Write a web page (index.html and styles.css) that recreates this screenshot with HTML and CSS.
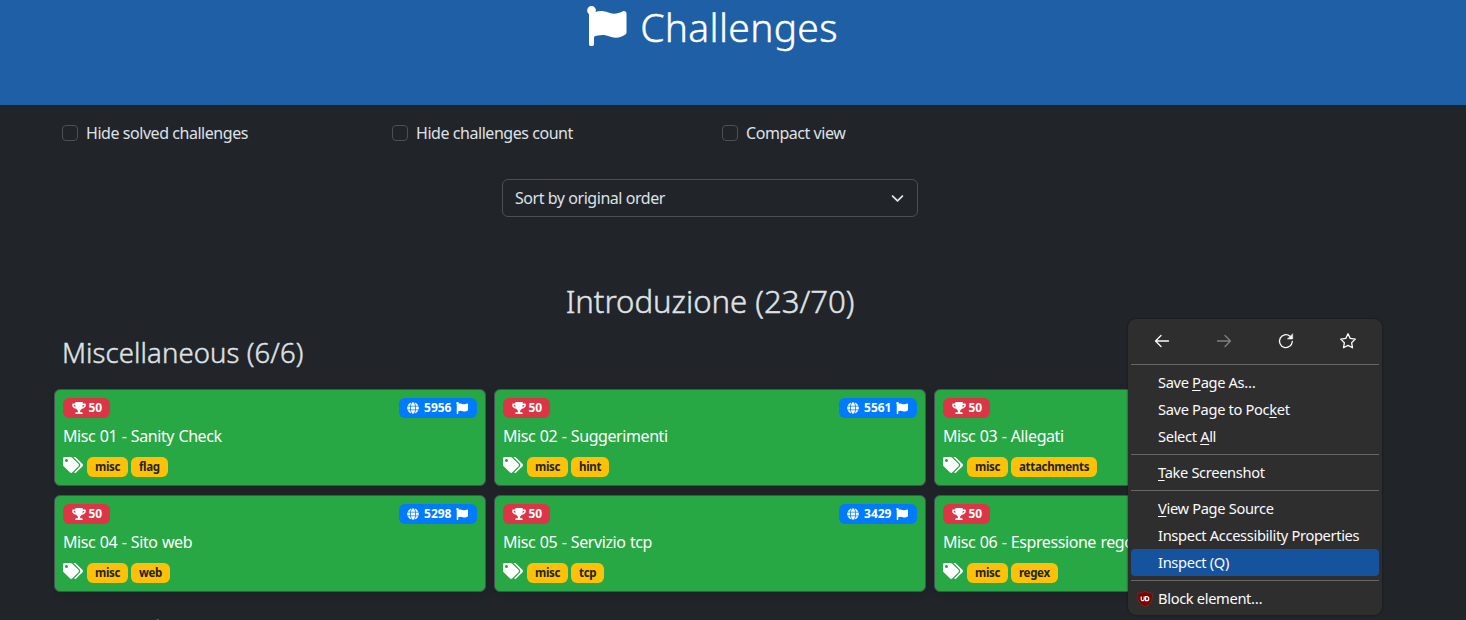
FILE: index.html
```
<!DOCTYPE html>
<html lang="it">
<head>
<meta charset="utf-8">
<title>Challenges</title>
<link rel="stylesheet" href="styles.css">
</head>
<body>
<svg class="defs" width="0" height="0">
  <symbol id="flag" viewBox="0 0 512 512"><path fill="currentColor" d="M349.565 98.783C295.978 98.783 251.721 64 184.348 64c-24.955 0-47.309 4.384-68.045 12.013a55.947 55.947 0 0 0 3.586-23.562C118.117 24.015 94.806 1.206 66.338.048 34.345-1.254 8 24.296 8 56c0 19.026 9.497 35.825 24 45.945V488c0 13.255 10.745 24 24 24h16c13.255 0 24-10.745 24-24v-94.4c28.311-12.064 63.582-22.122 114.435-22.122 53.588 0 97.844 34.783 165.217 34.783 48.169 0 86.667-16.294 122.505-40.858C506.84 359.452 512 349.571 512 339.045v-243.1c0-23.393-24.269-38.87-45.485-29.016-34.338 15.948-76.454 31.854-116.95 31.854z"/></symbol>
  <symbol id="trophy" viewBox="0 0 576 512"><path fill="currentColor" d="M552 64H448V24c0-13.300-10.700-24-24-24H152c-13.300 0-24 10.700-24 24v40H24C10.700 64 0 74.700 0 88v56c0 35.700 22.500 72.400 61.900 100.700 31.500 22.700 69.800 37.100 110 41.700C203.300 338.500 240 360 240 360v72h-48c-35.300 0-64 20.700-64 56v12c0 6.600 5.400 12 12 12h296c6.600 0 12-5.400 12-12v-12c0-35.300-28.700-56-64-56h-48v-72s36.700-21.500 68.100-73.600c40.300-4.600 78.600-19 110-41.700 39.300-28.300 61.900-65 61.900-100.700V88c0-13.300-10.700-24-24-24zM99.300 192.800C74.900 175.200 64 155.600 64 144v-16h64.200c1 32.600 5.800 61.200 12.800 86.200-15.100-5.200-29.200-12.400-41.700-21.400zM512 144c0 16.100-17.700 36.100-35.300 48.800-12.500 9-26.700 16.200-41.800 21.400 7-25 11.800-53.600 12.800-86.200H512v16z"/></symbol>
  <symbol id="globe" viewBox="0 0 496 512"><path fill="currentColor" d="M336.500 160C322 70.700 287.800 8 248 8s-74 62.700-88.500 152h177zM152 256c0 22.200 1.200 43.500 3.300 64h185.300c2.100-20.500 3.300-41.800 3.300-64s-1.200-43.500-3.300-64H155.300c-2.100 20.500-3.300 41.800-3.300 64zm324.700-96c-28.600-67.900-86.500-120.400-158-141.600 24.400 33.800 41.200 84.700 50 141.600h108zM177.200 18.400C105.800 39.600 47.800 92.100 19.300 160h108c8.700-56.900 25.500-107.800 49.900-141.600zM487.400 192H372.700c2.100 21 3.300 42.500 3.300 64s-1.200 43-3.300 64h114.600c5.500-20.500 8.600-41.800 8.600-64s-3.100-43.500-8.500-64zM120 256c0-21.500 1.200-43 3.300-64H8.600C3.200 212.500 0 233.800 0 256s3.200 43.500 8.600 64h114.600c-2-21-3.200-42.500-3.200-64zm39.500 96c14.500 89.300 48.700 152 88.500 152s74-62.700 88.500-152h-177zm159.300 141.600c71.400-21.200 129.400-73.700 158-141.600h-108c-8.800 56.900-25.600 107.800-50 141.600zM19.300 352c28.600 67.900 86.500 120.400 158 141.600-24.400-33.800-41.200-84.700-50-141.600h-108z"/></symbol>
  <symbol id="tags" viewBox="0 0 640 512"><path fill="currentColor" d="M497.941 225.941L286.059 14.059A48 48 0 0 0 252.118 0H48C21.490 0 0 21.490 0 48v204.118a48 48 0 0 0 14.059 33.941l211.882 211.882c18.744 18.745 49.136 18.746 67.882 0l204.118-204.118c18.745-18.745 18.745-49.137 0-67.882zM112 160c-26.510 0-48-21.490-48-48s21.490-48 48-48 48 21.490 48 48-21.490 48-48 48zm513.941 133.823L421.823 497.941c-18.745 18.745-49.137 18.745-67.882 0l-.36-.36L527.640 323.522c16.999-16.999 26.360-39.600 26.360-63.640s-9.362-46.641-26.360-63.640L331.397 0h48.721a48 48 0 0 1 33.941 14.059l211.882 211.882c18.745 18.745 18.745 49.137 0 67.882z"/></symbol>
</svg>
<header class="hero"><h1><svg class="hero-flag"><use href="#flag"/></svg><span>Challenges</span></h1></header>
<main class="container">
  <div class="options">
    <label><input type="checkbox"><span>Hide solved challenges</span></label>
    <label><input type="checkbox"><span>Hide challenges count</span></label>
    <label><input type="checkbox"><span>Compact view</span></label>
  </div>
  <div class="select"><span>Sort by original order</span><svg width="13" height="13" viewBox="0 0 16 16"><path d="m2 5 6 6 6-6" fill="none" stroke="#dee2e6" stroke-width="2.200" stroke-linecap="round" stroke-linejoin="round"/></svg></div>
  <h2><span>Introduzione (23/70)</span></h2>
  <h3><span>Miscellaneous (6/6)</span></h3>
  <div class="grid">
    <article class="card"><div class="row"><b class="badge red"><svg class="trophy"><use href="#trophy"/></svg>50</b><b class="badge blue"><svg class="globe"><use href="#globe"/></svg>5956<svg class="mini-flag"><use href="#flag"/></svg></b></div><p><span>Misc 01 - Sanity Check</span></p><div class="tags"><svg><use href="#tags"/></svg><b class="badge yellow">misc</b><b class="badge yellow">flag</b></div></article>
    <article class="card"><div class="row"><b class="badge red"><svg class="trophy"><use href="#trophy"/></svg>50</b><b class="badge blue"><svg class="globe"><use href="#globe"/></svg>5561<svg class="mini-flag"><use href="#flag"/></svg></b></div><p><span>Misc 02 - Suggerimenti</span></p><div class="tags"><svg><use href="#tags"/></svg><b class="badge yellow">misc</b><b class="badge yellow">hint</b></div></article>
    <article class="card"><div class="row"><b class="badge red"><svg class="trophy"><use href="#trophy"/></svg>50</b></div><p><span>Misc 03 - Allegati</span></p><div class="tags"><svg><use href="#tags"/></svg><b class="badge yellow">misc</b><b class="badge yellow">attachments</b></div></article>
    <article class="card"><div class="row"><b class="badge red"><svg class="trophy"><use href="#trophy"/></svg>50</b><b class="badge blue"><svg class="globe"><use href="#globe"/></svg>5298<svg class="mini-flag"><use href="#flag"/></svg></b></div><p><span>Misc 04 - Sito web</span></p><div class="tags"><svg><use href="#tags"/></svg><b class="badge yellow">misc</b><b class="badge yellow">web</b></div></article>
    <article class="card"><div class="row"><b class="badge red"><svg class="trophy"><use href="#trophy"/></svg>50</b><b class="badge blue"><svg class="globe"><use href="#globe"/></svg>3429<svg class="mini-flag"><use href="#flag"/></svg></b></div><p><span>Misc 05 - Servizio tcp</span></p><div class="tags"><svg><use href="#tags"/></svg><b class="badge yellow">misc</b><b class="badge yellow">tcp</b></div></article>
    <article class="card"><div class="row"><b class="badge red"><svg class="trophy"><use href="#trophy"/></svg>50</b></div><p><span>Misc 06 - Espressione rego</span></p><div class="tags"><svg><use href="#tags"/></svg><b class="badge yellow">misc</b><b class="badge yellow">regex</b></div></article>
  </div>
  <h3 class="next"><span>Network Security (3/10)</span></h3>
</main>
<nav class="menu">
  <div class="nav-icons">
    <svg viewBox="0 0 16 16"><path d="M14.500 8H1.500M7 2.500 1.500 8 7 13.500"/></svg>
    <svg class="off" viewBox="0 0 16 16"><path d="M1.500 8h13M9 2.500 14.500 8 9 13.500"/></svg>
    <svg viewBox="0 0 16 16"><path d="M14.300 8.500A6.400 6.400 0 1 1 12 3.200"/><path d="M14.700 1v5H9.700z" fill="#fbfbfe" stroke-width=".5"/></svg>
    <svg viewBox="0 0 16 16"><path d="m8 .7 2.200 4.700 5.100.7-3.700 3.600.9 5.100L8 12.400l-4.500 2.400.9-5.100L.7 6.100l5.100-.7z"/></svg>
  </div>
  <hr>
  <div class="item"><span>Save <u>P</u>age As…</span></div>
  <div class="item"><span>Save Page to Poc<u>k</u>et</span></div>
  <div class="item"><span>Select <u>A</u>ll</span></div>
  <hr>
  <div class="item"><span><u>T</u>ake Screenshot</span></div>
  <hr>
  <div class="item"><span><u>V</u>iew Page Source</span></div>
  <div class="item"><span>Inspect Accessibility Properties</span></div>
  <div class="item active"><span>Inspect (Q)</span></div>
  <hr>
  <div class="item with-icon"><svg width="16" height="16" viewBox="0 0 16 16"><path d="M8 .3c2.500 1.400 4.500 2 7.400 2C15.400 9.500 14.500 13 8 15.700 1.500 13 .6 9.500.6 2.300c2.900 0 4.900-.6 7.400-2z" fill="#800000" stroke="#6b4040" stroke-width=".5"/><path d="M4.200 5.500v2.700a1.500 1.500 0 0 0 3 0V5.500M8.600 5.700v4h1.200a2 2 0 0 0 0-4z" fill="none" stroke="#fff" stroke-width="1.200"/></svg><span>Block element…</span></div>
</nav>
</body>
</html>
```
FILE: styles.css
```
* { box-sizing: border-box; }
body { margin: 0; width: 1466px; height: 620px; overflow: hidden; position: relative; background: #212529; color: #dee2e6; font: 16px/24px "Noto Sans", sans-serif; letter-spacing: -.45px; }
.defs { position: absolute; }
h1, h2, h3, p { margin: 0; font-weight: 300; }
h1, h2, h3 { -webkit-text-stroke: .45px currentColor; }
.hero { height: 105px; background: #1e5fa6; color: #fff; padding-top: 3px; }
.hero h1 { width: 1424px; display: flex; justify-content: center; gap: 13px; font-size: 39px; line-height: 48px; letter-spacing: .3px; }
.hero-flag { width: 41px; height: 40px; margin-top: 3px; }
.container { width: 1320px; height: 515px; overflow: hidden; margin-left: 50px; }
.options { display: flex; padding: 16px 12px 0; }
.options label { width: 330px; height: 24px; display: flex; align-items: center; gap: 8px; }
.options input { appearance: none; width: 16px; height: 16px; margin: 0; border: 1px solid #495057; border-radius: 4px; }
.select { width: 416px; height: 38px; margin: 34px auto 0 452px; border: 1px solid #495057; border-radius: 6px; padding: 0 13.500px 0 12px; display: flex; align-items: center; justify-content: space-between; }
h2 { margin-top: 65px; text-align: center; font-size: 31.200px; line-height: 38px; letter-spacing: -.05px; }
h3 { margin: 16px 12px 0; font-size: 27.500px; line-height: 34px; letter-spacing: .1px; }
.grid { display: grid; grid-template-columns: repeat(3, 432px); grid-auto-rows: 97px; gap: 9px 8px; padding: 19px 4px 0; }
.card { background: #28a745; border: 1px solid #495057; border-radius: 6px; padding: 8px; box-shadow: 0 2px 8px rgba(0, 0, 0, .15); color: #fff; }
.row { display: flex; justify-content: space-between; height: 20px; }
.badge { display: flex; align-items: center; height: 20px; padding: 0 8px; border-radius: 6px; font-size: 12px; line-height: 12px; font-weight: 700; letter-spacing: 0; }
.red { background: #dc3545; padding: 0 7.500px 0 8.500px; }
.blue { background: #007bff; padding-right: 9px; }
.yellow { background: #ffc107; color: #212529; font-size: 11.500px; letter-spacing: -.3px; padding: 0 7.800px 0 8px; }
.trophy { width: 14px; height: 12px; margin-right: 3px; }
.globe { width: 12px; height: 12px; margin-right: 5px; }
.mini-flag { width: 12px; height: 12px; margin-left: 4.500px; }
.card p { font-weight: 400; letter-spacing: -.42px; word-spacing: .7px; margin-top: 6px; height: 25px; line-height: 25px; white-space: nowrap; }
.tags { display: flex; gap: 3px; margin-top: 8px; }
.tags > svg { width: 20px; height: 16px; margin-right: 1px; }
.next { margin-top: 22px; white-space: nowrap; }
.menu { position: absolute; left: 1127.500px; top: 319px; width: 254px; height: 296px; padding: 4px 3px 4px 3.500px; background: #2e2e2e; border-radius: 8px; box-shadow: 0 0 2px #111; color: #fbfbfe; font-size: 14.670px; letter-spacing: -.34px; }
.nav-icons { display: flex; height: 37px; padding-bottom: 1px; align-items: center; justify-content: space-around; }
.nav-icons svg { width: 16px; height: 16px; fill: none; stroke: #fbfbfe; stroke-width: 1.300; stroke-linejoin: round; stroke-linecap: round; }
.nav-icons .off { opacity: .4; }
.menu hr { height: 1px; border: 0; background: #666; margin: 4px 0; }
.item { height: 27px; line-height: 27px; padding-left: 27px; border-radius: 4px; white-space: nowrap; }
.item u { text-underline-offset: 2px; text-decoration-thickness: 1px; }
.active { background: #15539e; }
.with-icon { display: flex; align-items: center; gap: 5px; padding-left: 6px; }
```
